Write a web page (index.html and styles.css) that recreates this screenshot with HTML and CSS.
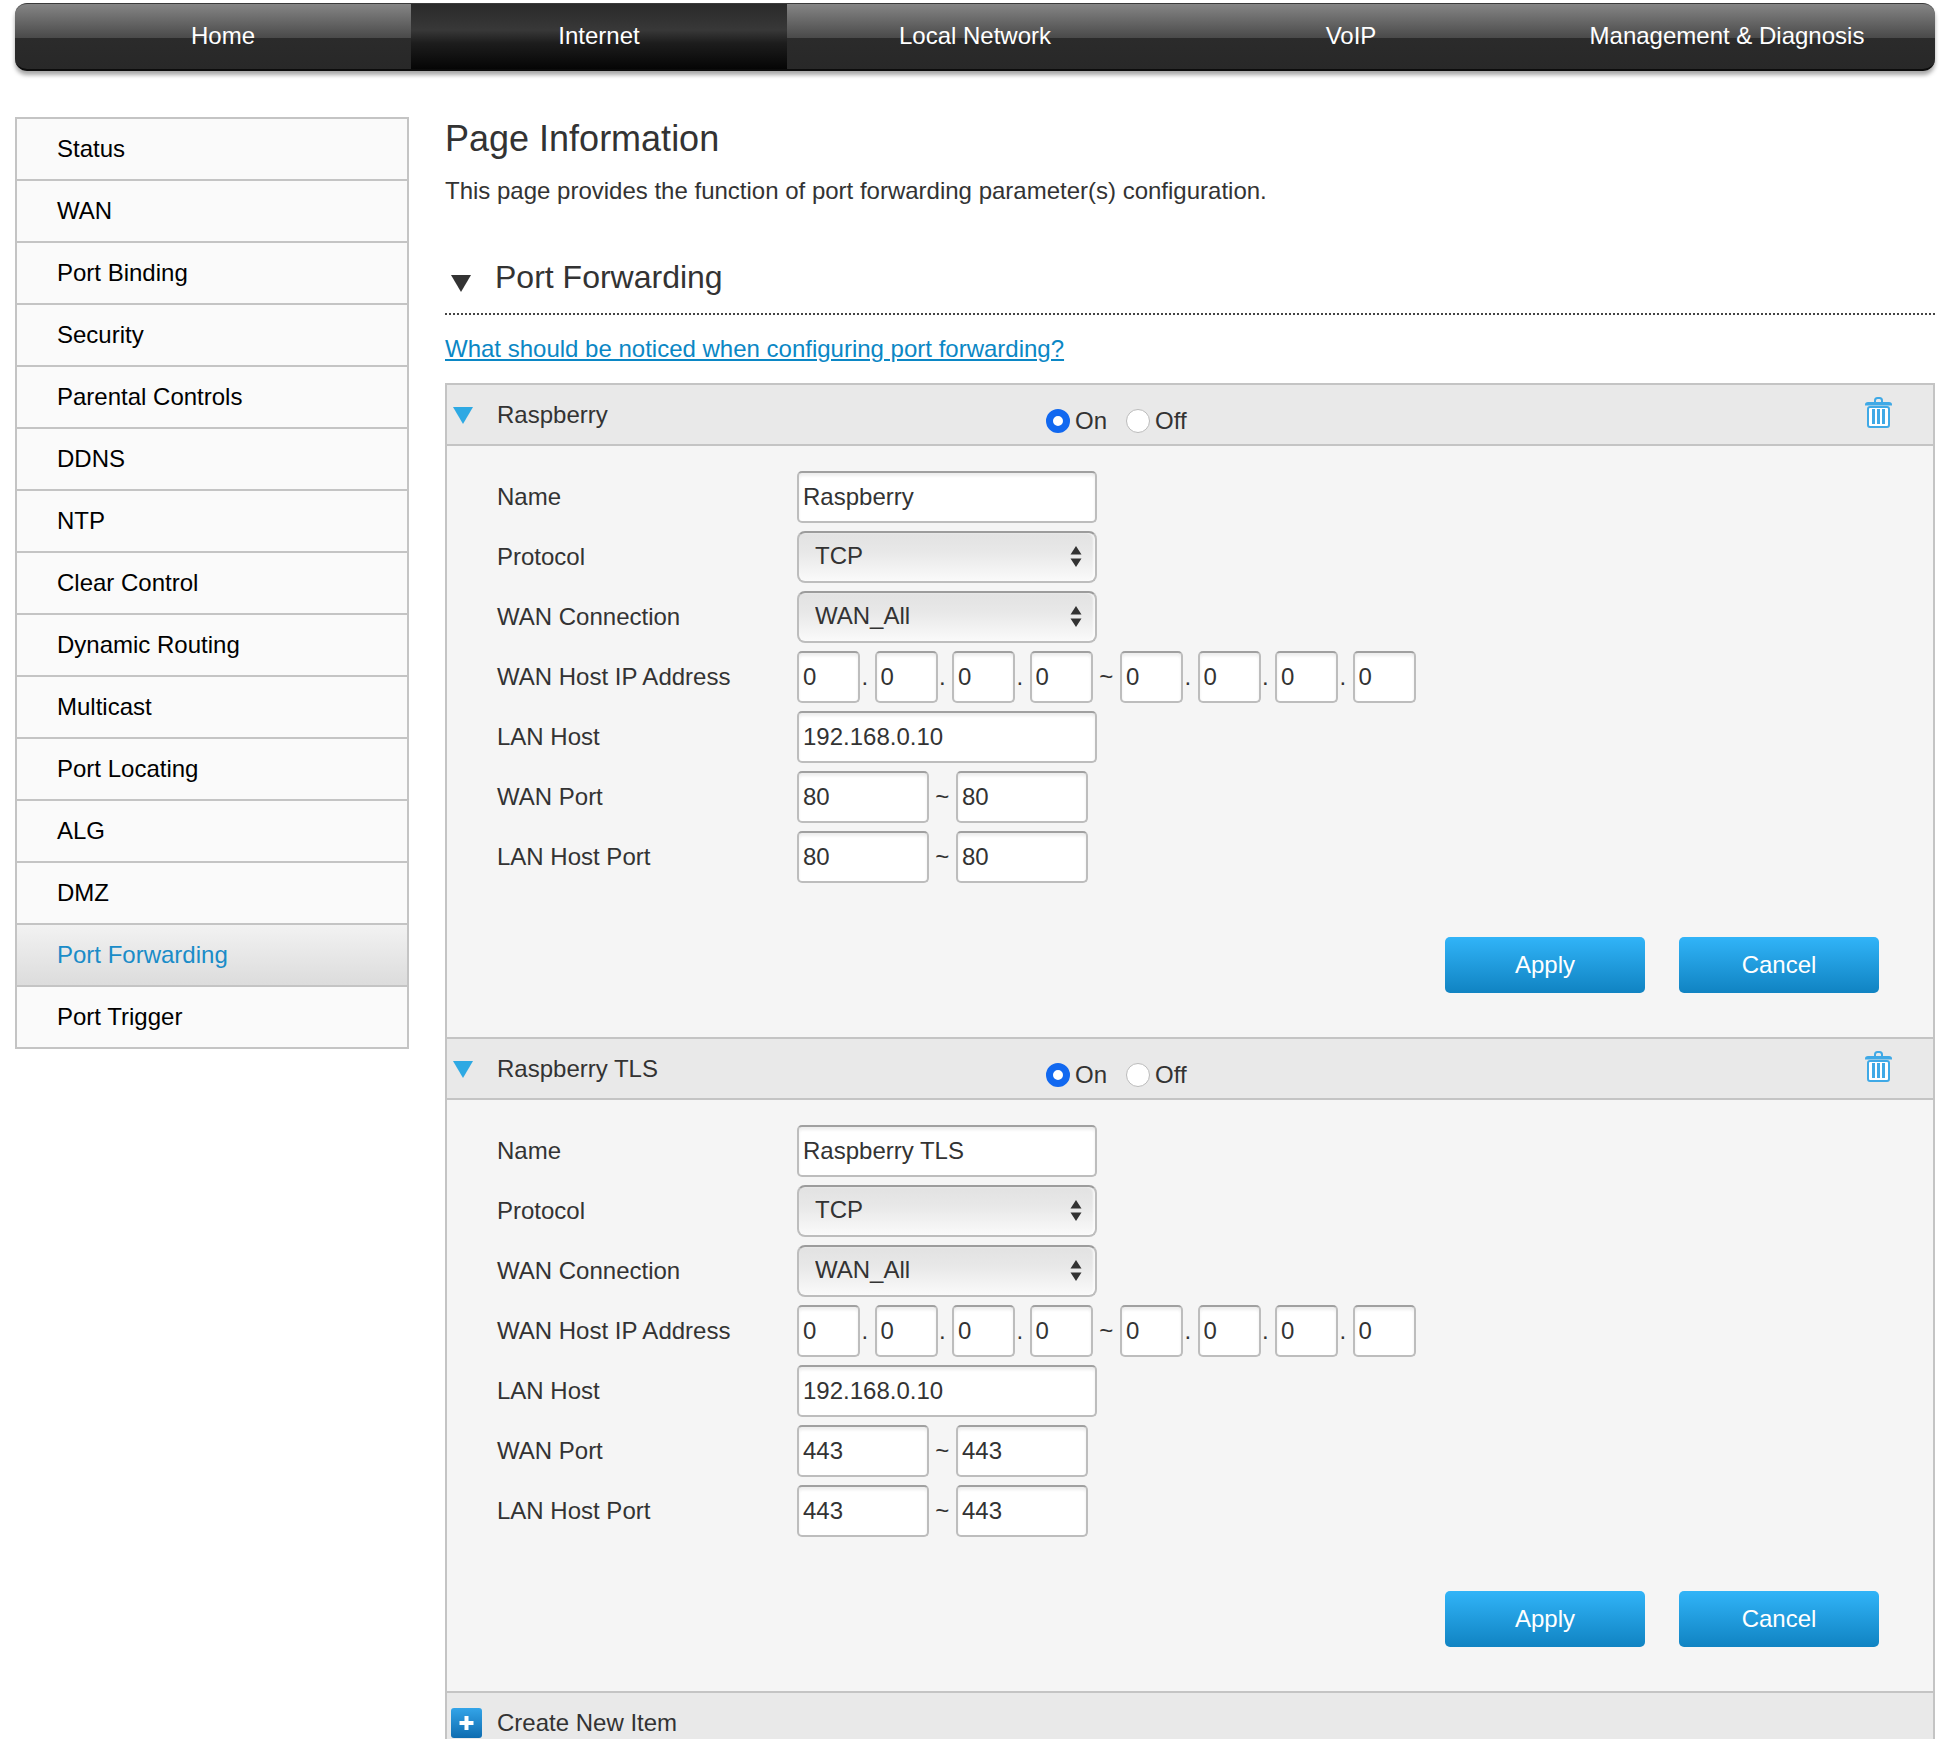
FILE: index.html
```html
<!DOCTYPE html>
<html lang="en">
<head>
<meta charset="utf-8">
<title>Port Forwarding</title>
<link rel="stylesheet" href="styles.css">
</head>
<body>
<nav class="topnav">
  <a class="tab" href="#">Home</a>
  <a class="tab tab-active" href="#">Internet</a>
  <a class="tab" href="#">Local Network</a>
  <a class="tab" href="#">VoIP</a>
  <a class="tab" href="#">Management &amp; Diagnosis</a>
</nav>
<div class="layout">
  <aside class="sidebar">
    <a class="side-item" href="#">Status</a>
    <a class="side-item" href="#">WAN</a>
    <a class="side-item" href="#">Port Binding</a>
    <a class="side-item" href="#">Security</a>
    <a class="side-item" href="#">Parental Controls</a>
    <a class="side-item" href="#">DDNS</a>
    <a class="side-item" href="#">NTP</a>
    <a class="side-item" href="#">Clear Control</a>
    <a class="side-item" href="#">Dynamic Routing</a>
    <a class="side-item" href="#">Multicast</a>
    <a class="side-item" href="#">Port Locating</a>
    <a class="side-item" href="#">ALG</a>
    <a class="side-item" href="#">DMZ</a>
    <a class="side-item side-active" href="#">Port Forwarding</a>
    <a class="side-item" href="#">Port Trigger</a>
  </aside>
  <main class="content">
    <h1 class="page-title">Page Information</h1>
    <p class="page-desc">This page provides the function of port forwarding parameter(s) configuration.</p>
    <h2 class="section-title">
      <svg class="section-arrow" viewBox="0 0 20 17" width="20" height="17"><path d="M0 0H20L10 17Z" fill="#333"/></svg>
      Port Forwarding
    </h2>
    <a class="notice" href="#">What should be noticed when configuring port forwarding?</a>

    <section class="panel">
      <header class="panel-head">
        <svg class="panel-arrow" viewBox="0 0 20 17" width="20" height="17"><path d="M0 0H20L10 17Z" fill="#2ea9e3"/></svg>
        <span class="panel-name">Raspberry</span>
        <div class="switch">
          <input class="radio" type="radio" name="s1" checked aria-label="On"><span class="switch-on">On</span>
          <input class="radio" type="radio" name="s1" aria-label="Off"><span>Off</span>
        </div>
        <svg class="trash" viewBox="0 0 27 31" width="27" height="31"><path d="M10 5V3.500Q10 1 12.500 1H14.500Q17 1 17 3.500V5" fill="none" stroke="#3fa9e6" stroke-width="2"/><path d="M0 7.500Q0 5 3 5H24Q27 5 27 7.500V8.500H0Z" fill="#3fa9e6"/><rect x="3" y="10" width="21" height="20" rx="2" fill="#fff" stroke="#3fa9e6" stroke-width="2"/><path d="M8.500 12V27M13.500 12V27M18.500 12V27" stroke="#3fa9e6" stroke-width="3"/></svg>
      </header>
      <div class="panel-body">
        <div class="row"><label class="row-label">Name</label><input class="field field-wide" type="text" value="Raspberry"></div>
        <div class="row"><label class="row-label">Protocol</label><div class="select-wrap"><select class="select"><option>TCP</option></select><svg class="select-arrows" viewBox="0 0 12 21" width="12" height="21"><path d="M6 0L11.500 8.500H.5ZM6 21L.5 12.500H11.500Z" fill="#333"/></svg></div></div>
        <div class="row"><label class="row-label">WAN Connection</label><div class="select-wrap"><select class="select"><option>WAN_All</option></select><svg class="select-arrows" viewBox="0 0 12 21" width="12" height="21"><path d="M6 0L11.500 8.500H.5ZM6 21L.5 12.500H11.500Z" fill="#333"/></svg></div></div>
        <div class="row"><label class="row-label">WAN Host IP Address</label><input class="field field-ip" type="text" value="0"><span class="dot">.</span><input class="field field-ip" type="text" value="0"><span class="dot">.</span><input class="field field-ip" type="text" value="0"><span class="dot">.</span><input class="field field-ip" type="text" value="0"><span class="tilde">~</span><input class="field field-ip" type="text" value="0"><span class="dot">.</span><input class="field field-ip" type="text" value="0"><span class="dot">.</span><input class="field field-ip" type="text" value="0"><span class="dot">.</span><input class="field field-ip" type="text" value="0"></div>
        <div class="row"><label class="row-label">LAN Host</label><input class="field field-wide" type="text" value="192.168.0.10"></div>
        <div class="row"><label class="row-label">WAN Port</label><input class="field field-port" type="text" value="80"><span class="tilde">~</span><input class="field field-port" type="text" value="80"></div>
        <div class="row"><label class="row-label">LAN Host Port</label><input class="field field-port" type="text" value="80"><span class="tilde">~</span><input class="field field-port" type="text" value="80"></div>
        <div class="actions"><button class="btn" type="button">Apply</button><button class="btn" type="button">Cancel</button></div>
      </div>
    </section>

    <section class="panel">
      <header class="panel-head">
        <svg class="panel-arrow" viewBox="0 0 20 17" width="20" height="17"><path d="M0 0H20L10 17Z" fill="#2ea9e3"/></svg>
        <span class="panel-name">Raspberry TLS</span>
        <div class="switch">
          <input class="radio" type="radio" name="s2" checked aria-label="On"><span class="switch-on">On</span>
          <input class="radio" type="radio" name="s2" aria-label="Off"><span>Off</span>
        </div>
        <svg class="trash" viewBox="0 0 27 31" width="27" height="31"><path d="M10 5V3.500Q10 1 12.500 1H14.500Q17 1 17 3.500V5" fill="none" stroke="#3fa9e6" stroke-width="2"/><path d="M0 7.500Q0 5 3 5H24Q27 5 27 7.500V8.500H0Z" fill="#3fa9e6"/><rect x="3" y="10" width="21" height="20" rx="2" fill="#fff" stroke="#3fa9e6" stroke-width="2"/><path d="M8.500 12V27M13.500 12V27M18.500 12V27" stroke="#3fa9e6" stroke-width="3"/></svg>
      </header>
      <div class="panel-body">
        <div class="row"><label class="row-label">Name</label><input class="field field-wide" type="text" value="Raspberry TLS"></div>
        <div class="row"><label class="row-label">Protocol</label><div class="select-wrap"><select class="select"><option>TCP</option></select><svg class="select-arrows" viewBox="0 0 12 21" width="12" height="21"><path d="M6 0L11.500 8.500H.5ZM6 21L.5 12.500H11.500Z" fill="#333"/></svg></div></div>
        <div class="row"><label class="row-label">WAN Connection</label><div class="select-wrap"><select class="select"><option>WAN_All</option></select><svg class="select-arrows" viewBox="0 0 12 21" width="12" height="21"><path d="M6 0L11.500 8.500H.5ZM6 21L.5 12.500H11.500Z" fill="#333"/></svg></div></div>
        <div class="row"><label class="row-label">WAN Host IP Address</label><input class="field field-ip" type="text" value="0"><span class="dot">.</span><input class="field field-ip" type="text" value="0"><span class="dot">.</span><input class="field field-ip" type="text" value="0"><span class="dot">.</span><input class="field field-ip" type="text" value="0"><span class="tilde">~</span><input class="field field-ip" type="text" value="0"><span class="dot">.</span><input class="field field-ip" type="text" value="0"><span class="dot">.</span><input class="field field-ip" type="text" value="0"><span class="dot">.</span><input class="field field-ip" type="text" value="0"></div>
        <div class="row"><label class="row-label">LAN Host</label><input class="field field-wide" type="text" value="192.168.0.10"></div>
        <div class="row"><label class="row-label">WAN Port</label><input class="field field-port" type="text" value="443"><span class="tilde">~</span><input class="field field-port" type="text" value="443"></div>
        <div class="row"><label class="row-label">LAN Host Port</label><input class="field field-port" type="text" value="443"><span class="tilde">~</span><input class="field field-port" type="text" value="443"></div>
        <div class="actions"><button class="btn" type="button">Apply</button><button class="btn" type="button">Cancel</button></div>
      </div>
    </section>

    <div class="create">
      <svg class="create-icon" viewBox="0 0 31 30" width="31" height="30"><defs><linearGradient id="pl" x1="0" y1="0" x2="0" y2="1"><stop offset="0" stop-color="#33a4e8"/><stop offset="1" stop-color="#0e6cb0"/></linearGradient></defs><rect width="31" height="30" rx="3" fill="url(#pl)"/><path d="M15.500 8V22M8.500 15H22.500" stroke="#fff" stroke-width="4"/></svg>
      <span class="create-text">Create New Item</span>
    </div>
  </main>
</div>
</body>
</html>
```
FILE: styles.css
```css
* { box-sizing: border-box; }
html, body { margin: 0; background: #fff; }
body {
  padding: 3px 17px 0 15px;
  font-family: "Liberation Sans", Arial, sans-serif;
  font-size: 24px;
  color: #333;
}
a { text-decoration: none; }

.topnav {
  display: flex;
  height: 68px;
  padding: 0 20px 0 20px;
  border-radius: 12px;
  border-top: 1px solid #3a3a3a;
  border-bottom: 2px solid #0c0c0c;
  background: linear-gradient(#858585 0, #4a4a4a 52%, #2b2b2b 52%, #282828 100%);
  box-shadow: 0 4px 4px rgba(0, 0, 0, .35);
}
.tab {
  flex: 0 0 376px;
  display: flex;
  align-items: center;
  justify-content: center;
  padding-bottom: 2px;
  color: #fff;
}
.tab-active { background: linear-gradient(#2a2a2a 0, #383838 40%, #1d1d1d 60%, #050505 100%); }

.layout {
  display: flex;
  align-items: flex-start;
  gap: 36px;
  margin-top: 46px;
}
.sidebar {
  flex: 0 0 394px;
  display: flex;
  flex-direction: column;
  border: 2px solid #c4c4c4;
  background: #fafafa;
}
.side-item {
  display: flex;
  align-items: center;
  height: 62px;
  padding-left: 40px;
  border-top: 2px solid #c4c4c4;
  color: #000;
}
.side-item:first-child { height: 60px; border-top: 0; }
.side-active { color: #1a8cc8; background: linear-gradient(#f2f2f2, #dcdcdc); }

.content { flex: 1; min-width: 0; }
.page-title {
  margin: 0;
  font-size: 36px;
  font-weight: 400;
  line-height: 44px;
}
.page-desc {
  margin: 14px 0 0;
  line-height: 32px;
}
.section-title {
  display: flex;
  align-items: center;
  gap: 24px;
  margin: 43px 0 0;
  height: 65px;
  padding-bottom: 8px;
  padding-left: 6px;
  border-bottom: 2px dotted #444;
  font-size: 32px;
  font-weight: 400;
}
.section-arrow { margin-top: 12px; }
.notice {
  display: block;
  margin: 18px 0 18px;
  line-height: 32px;
  color: #0b87c5;
  text-decoration: underline;
}

.panel {
  border-left: 2px solid #c4c4c4;
  border-right: 2px solid #c4c4c4;
  background: #f5f5f5;
}
.panel-head {
  display: flex;
  align-items: center;
  height: 63px;
  padding: 0 41px 0 6px;
  border-top: 2px solid #c4c4c4;
  border-bottom: 2px solid #c4c4c4;
  background: #e9e9e9;
}
.panel-arrow { flex: none; margin: 2px 24px 0 0; }
.panel-name { flex: 0 0 549px; }
.switch {
  display: flex;
  align-items: center;
  margin-top: 12px;
}
.radio {
  appearance: none;
  width: 24px;
  height: 24px;
  margin: 0 5px 0 0;
  border: 1px solid #bbb;
  border-radius: 50%;
  background: #fff;
}
.radio:checked { border: 7px solid #1168f0; }
.switch-on { margin-right: 19px; }
.trash { margin: -4px 0 0 auto; }

.panel-body { height: 591px; padding: 25px 54px 0 50px; }
.row {
  display: flex;
  align-items: center;
  height: 52px;
  margin-bottom: 8px;
}
.row-label { flex: 0 0 300px; }
.field {
  height: 52px;
  padding: 0 0 0 4px;
  border: 2px solid #bdbdbd;
  border-top-color: #a0a0a0;
  border-radius: 5px;
  background: #fff;
  box-shadow: inset 0 3px 3px rgba(0, 0, 0, .07);
  font: inherit;
  color: #333;
  outline: none;
}
.field-wide { width: 300px; }
.field-ip { width: 63px; }
.field-port { width: 131.5px; }
.dot, .tilde { text-align: center; line-height: 52px; }
.dot { flex: 0 0 14.5px; padding-right: 5px; }
.tilde { flex: 0 0 27.5px; }

.select-wrap { position: relative; width: 300px; height: 52px; }
.select {
  display: block;
  width: 100%;
  height: 100%;
  padding: 0 0 3px 16px;
  appearance: none;
  border: 2px solid #bdbdbd;
  border-top-color: #9c9c9c;
  border-radius: 8px;
  background: linear-gradient(#e2e2e2, #e8e8e8 40%, #fafafa);
  box-shadow: inset -2px 0 2px rgba(255, 255, 255, .7);
  font: inherit;
  color: #333;
}
.select-arrows { position: absolute; right: 15px; top: 15px; pointer-events: none; }

.actions {
  display: flex;
  justify-content: flex-end;
  gap: 34px;
  margin-top: 54px;
}
.btn {
  width: 200px;
  height: 56px;
  border: 0;
  border-radius: 5px;
  background: linear-gradient(#31b4f8, #1083c2);
  color: #fff;
  font: inherit;
}

.create {
  display: flex;
  align-items: center;
  height: 48px;
  padding: 13px 0 0 4px;
  border: 2px solid #c4c4c4;
  border-width: 2px 2px 0;
  background: #e9e9e9;
  overflow: hidden;
}
.create-icon { flex: none; margin-right: 15px; }
```
